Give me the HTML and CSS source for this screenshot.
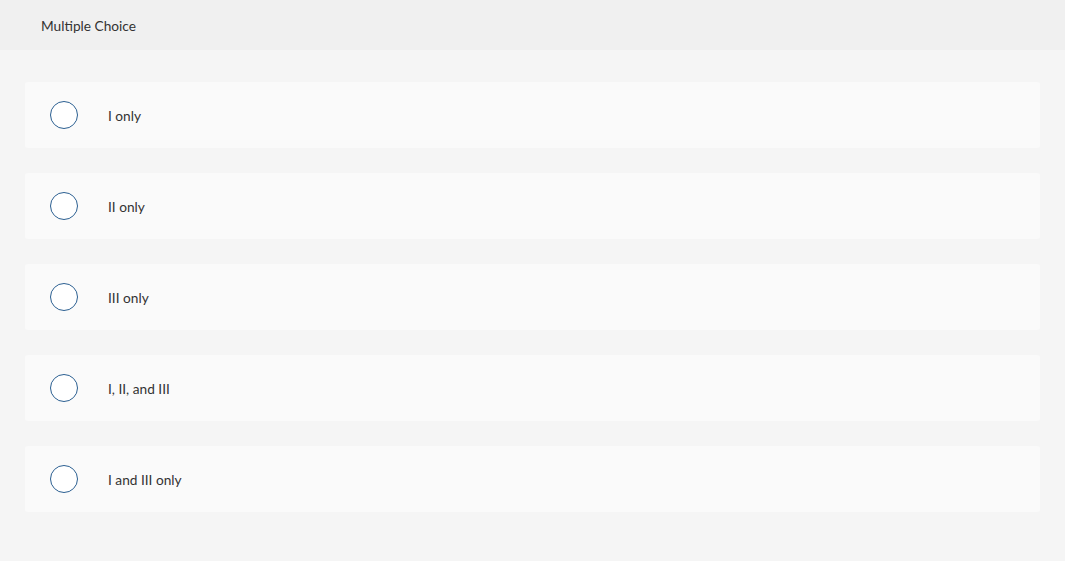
FILE: index.html
```html
<!DOCTYPE html>
<html>
   <head>
      <meta charset="utf-8">
      <title>Multiple Choice</title>
      <link rel="stylesheet" href="styles.css">
   </head>
   <body>
      <div class="header">Multiple Choice</div>

      <div class="choices">
        <div class="choice">
          <span class="radio"></span>
          <span class="label">I only</span>
        </div>
        <div class="choice">
          <span class="radio"></span>
          <span class="label">II only</span>
        </div>
        <div class="choice">
          <span class="radio"></span>
          <span class="label">III only</span>
        </div>
        <div class="choice">
          <span class="radio"></span>
          <span class="label">I, II, and III</span>
        </div>
        <div class="choice">
          <span class="radio"></span>
          <span class="label">I and III only</span>
        </div>
      </div>
   </body>
</html>
```

FILE: styles.css
```css
body {
  margin: 0;
  background: #f5f5f5;
  font-family: Lato, "Open Sans", sans-serif;
  font-size: 13.7px;
  color: #333;
}
.header {
  height: 50px;
  background: #f0f0f0;
  display: flex;
  align-items: center;
  padding-left: 41px;
}
.choices {
  display: flex;
  flex-direction: column;
  gap: 25px;
  padding: 32px 25px 0 25px;
}
.choice {
  height: 66px;
  background: #fafafa;
  border-radius: 3px;
  display: flex;
  align-items: center;
  padding-left: 25px;
}
.radio {
  width: 26px;
  height: 26px;
  border: 1px solid #2b5f91;
  border-radius: 50%;
  background: #fff;
}
.label {
  margin-left: 30px;
}
```
